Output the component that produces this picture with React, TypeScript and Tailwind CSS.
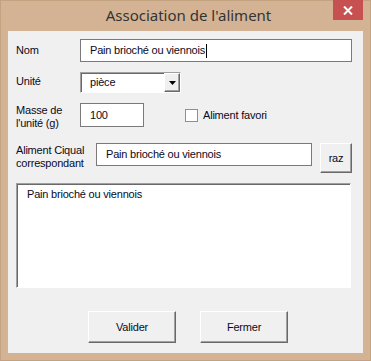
import React from 'react';

const font = { fontFamily: '"Liberation Sans", Arial, sans-serif', letterSpacing: '-0.2px' };

// classic raised button look
const raised =
  'border border-t-white border-l-white border-b-[#696969] border-r-[#696969] shadow-[inset_-1px_-1px_0_#a0a0a0] bg-[#f0f0f0]';

// classic sunken field look
const sunken =
  'border border-t-[#a0a0a0] border-l-[#a0a0a0] border-b-white border-r-white shadow-[inset_1px_1px_0_#696969] bg-white';

export default function App() {
  return (
    <div
      className="w-[371px] h-[361px] bg-[#d3b393] border border-[#c3a27f] flex flex-col text-[11px] text-[#0a0a1e]"
      style={font}
    >
      {/* Title bar */}
      <div className="h-[30px] flex items-start relative">
        <div
          className="flex-1 text-center text-[15px] text-[#333] pt-[3px] pl-[6px] tracking-normal"
          style={{ fontFamily: '"Noto Sans", "Open Sans", sans-serif' }}
        >
          Association de l'aliment
        </div>
        <div className="absolute right-[7px] top-[-1px] w-[30px] h-[20px] bg-[#c75050] flex items-center justify-center">
          <svg width="10" height="9" viewBox="0 0 10 9">
            <path d="M1 0.5 L9 8.5 M9 0.5 L1 8.5" stroke="white" strokeWidth="2" />
          </svg>
        </div>
      </div>

      {/* Client area */}
      <div className="mx-[7px] mb-[7px] flex-1 bg-[#f0f0f0] pt-[8px] px-[8px] flex flex-col">
        {/* Nom */}
        <div className="flex h-[23px]">
          <div className="w-[64px] pt-[3px]">Nom</div>
          <div className="w-[272px] h-[23px] border border-[#7a7a7a] bg-white flex items-center pl-[9px]">
            Pain brioché ou viennois
            <span className="inline-block w-px h-[14px] bg-black ml-px" />
          </div>
        </div>

        {/* Unité */}
        <div className="flex h-[21px] mt-[10px]">
          <div className="w-[64px] pt-[1px]">Unité</div>
          <div className={`w-[101px] h-[21px] ${sunken} flex items-center`}>
            <div className="flex-1 pl-[9px]">pièce</div>
            <div className={`w-[16px] h-[19px] ${raised} flex items-center justify-center`}>
              <svg width="7" height="4" viewBox="0 0 7 4">
                <path d="M0 0 H7 L3.5 4 Z" fill="black" />
              </svg>
            </div>
          </div>
        </div>

        {/* Masse */}
        <div className="flex h-[24px] mt-[10px]">
          <div className="w-[64px] leading-[13px] pt-[1px]">
            Masse de
            <br />
            l'unité (g)
          </div>
          <div className="w-[64px] h-[24px] border border-[#7a7a7a] bg-white flex items-center pl-[9px]">
            100
          </div>
          <div className="flex items-center ml-[41px] h-[24px]">
            <div className="w-[13px] h-[13px] border border-[#8f8f8f] bg-white" />
            <span className="ml-[5px]">Aliment favori</span>
          </div>
        </div>

        {/* Ciqual */}
        <div className="flex h-[30px] mt-[16px]">
          <div className="w-[80px] leading-[13px] pt-[1px]">
            Aliment Ciqual
            <br />
            correspondant
          </div>
          <div className="w-[216px] h-[23px] border border-[#7a7a7a] bg-white flex items-center pl-[9px]">
            Pain brioché ou viennois
          </div>
          <div className={`ml-[8px] w-[32px] h-[30px] ${raised} flex items-center justify-center`}>
            raz
          </div>
        </div>

        {/* List */}
        <div className={`mt-[10px] w-[335px] h-[105px] ${sunken} pl-[10px] pt-[2px]`}>
          Pain brioché ou viennois
        </div>

        {/* Buttons */}
        <div className="flex mt-[23px] pl-[72px] gap-[24px]">
          <div className={`w-[88px] h-[32px] ${raised} flex items-center justify-center`}>
            Valider
          </div>
          <div className={`w-[88px] h-[32px] ${raised} flex items-center justify-center`}>
            Fermer
          </div>
        </div>
      </div>
    </div>
  );
}
